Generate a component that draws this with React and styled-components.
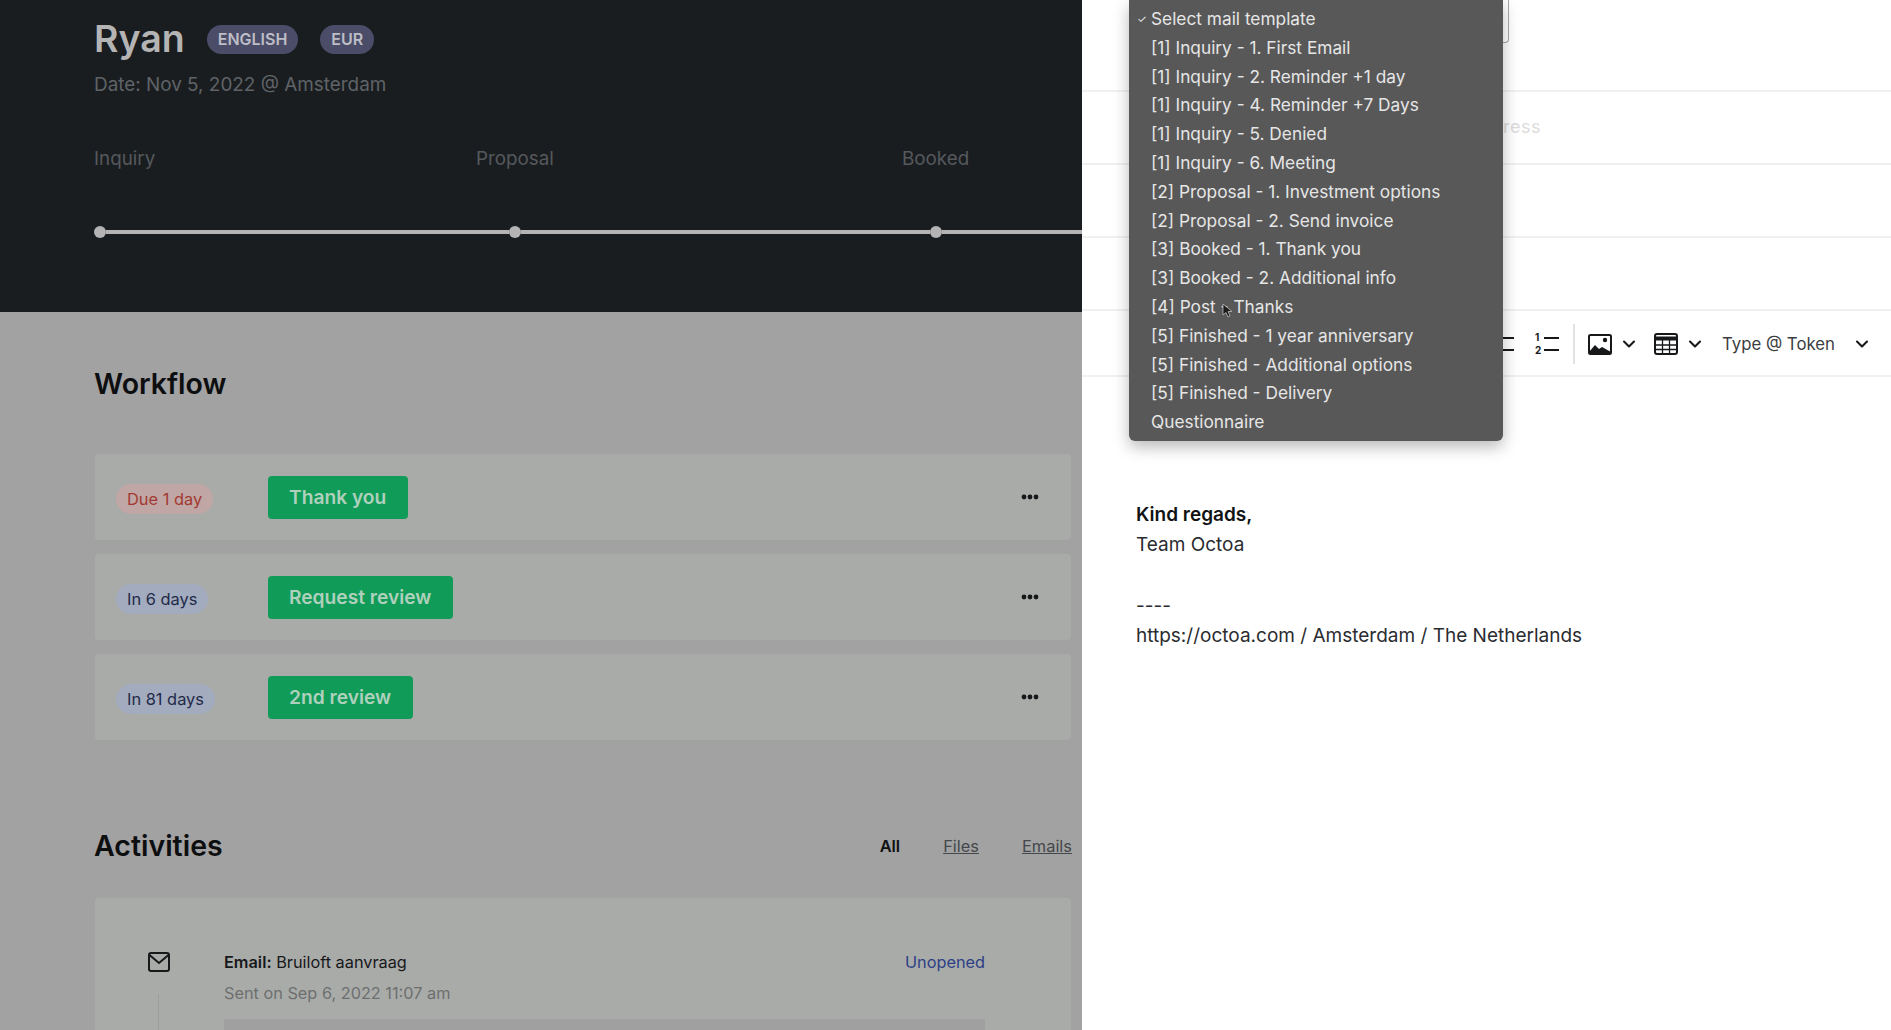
import styled, { createGlobalStyle } from "styled-components";
import { ChevronDown } from "lucide-react";

const Global = createGlobalStyle`
  html, body {
    margin: 0;
    height: 100%;
    overflow: hidden;
    background: #fff;
    font-family: Inter, "Liberation Sans", sans-serif;
  }
`;

const Page = styled.div`
  display: flex;
  width: 1891px;
  height: 1030px;
  overflow: hidden;
`;

const Left = styled.div`
  width: 1082px;
  flex: none;
  background: #a2a2a2;
  height: 100%;
  overflow: hidden;
`;

const Hero = styled.header`
  height: 312px;
  box-sizing: border-box;
  background: #1a1d20;
  padding: 17px 0 0 94px;
`;

const NameRow = styled.div`
  display: flex;
  align-items: center;
  height: 44px;
`;

const Name = styled.h1`
  margin: 0 22px 0 0;
  font-size: 37.5px;
  line-height: 44px;
  font-weight: 600;
  color: #b4b4b4;
`;

const Badge = styled.span`
  display: block;
  height: 29px;
  line-height: 29px;
  padding: 0 11px;
  margin-right: 22px;
  border-radius: 15px;
  background: #4b4c68;
  color: #bdbdc6;
  font-size: 16px;
  font-weight: 600;
`;

const DateLine = styled.div`
  margin-top: 13px;
  font-size: 18.9px;
  line-height: 22px;
  color: #5f6367;
`;

const Stages = styled.div`
  display: grid;
  grid-template-columns: 382px 426px 1fr;
  margin-top: 52px;
  font-size: 18.8px;
  line-height: 22px;
  color: #55585c;
`;

const Track = styled.div`
  display: flex;
  align-items: center;
  margin: 56px 0 0 0;
`;

const Dot = styled.span`
  width: 12px;
  height: 12px;
  flex: none;
  border-radius: 50%;
  background: #b4b4b4;
`;

const Segment = styled.span`
  height: 4px;
  background: #b4b4b4;
  flex: ${(p) => (p.$grow ? "1" : "none")};
  width: ${(p) => p.$w || 0}px;
`;

const Main = styled.main`
  padding: 55px 11px 0 95px;
`;

const SectionTitle = styled.h2`
  margin: 0 0 0 -1px;
  font-size: 28.5px;
  line-height: 34px;
  font-weight: 600;
  color: #0d0e10;
`;

const WorkflowList = styled.div`
  display: flex;
  flex-direction: column;
  gap: 14px;
  margin-top: 53px;
`;

const Card = styled.div`
  display: flex;
  align-items: center;
  height: 86px;
  padding: 0 32px 0 21px;
  border-radius: 4px;
  background: #a9aba9;
`;

const Due = styled.span`
  width: 152px;
  flex: none;
  display: flex;
  margin-top: 3px;
`;

const DuePill = styled.span`
  height: 30px;
  line-height: 30px;
  padding: 0 11px;
  border-radius: 15px;
  font-size: 16.4px;
  background: ${(p) => (p.$late ? "#c0a6a4" : "#a3abbe")};
  color: ${(p) => (p.$late ? "#a13a33" : "#1f2a48")};
`;

const ActionButton = styled.span`
  height: 43px;
  line-height: 43px;
  padding: 0 22px 0 21px;
  border-radius: 4px;
  background: #109c58;
  color: #aed0bc;
  font-size: 19.2px;
  font-weight: 600;
`;

const More = styled.svg`
  margin-left: auto;
  width: 18px;
  height: 6px;
  fill: #17181a;
`;

const ActivityHead = styled.div`
  display: flex;
  align-items: center;
  margin-top: 89px;
`;

const Tabs = styled.nav`
  margin: 0 -1px 0 auto;
  display: flex;
  gap: 43px;
  font-size: 16.4px;
`;

const Tab = styled.span`
  color: ${(p) => (p.$active ? "#101113" : "#44474b")};
  font-weight: ${(p) => (p.$active ? 600 : 400)};
  text-decoration: ${(p) => (p.$active ? "none" : "underline")};
`;

const ActivityCard = styled.section`
  display: grid;
  grid-template-columns: 128px 1fr;
  margin-top: 35px;
  height: 300px;
  box-sizing: border-box;
  padding: 52px 86px 0 53px;
  border-radius: 4px;
  background: #a9aba9;
`;

const IconCol = styled.div`
  display: flex;
  flex-direction: column;
  align-items: flex-start;
  padding-top: 2px;
`;

const Rail = styled.span`
  width: 1px;
  height: 200px;
  margin: 22px 0 0 10px;
  background: #9b9d9b;
`;

const ActivityBody = styled.div`
  min-width: 0;
  margin-left: -52px;
`;

const ActivityTop = styled.div`
  display: flex;
  justify-content: space-between;
  font-size: 16.3px;
  line-height: 24px;
  color: #17181a;

  b {
    font-weight: 600;
  }
`;

const Status = styled.span`
  color: #2d3f86;
`;

const Sent = styled.div`
  margin-top: 7px;
  font-size: 16.3px;
  line-height: 24px;
  color: #6d6f6f;
`;

const Preview = styled.div`
  height: 80px;
  margin-top: 14px;
  background: #a0a0a0;
`;

const Right = styled.div`
  position: relative;
  flex: 1;
  height: 100%;
  background: #fff;
  color: #303236;
`;

const Field = styled.div`
  box-sizing: border-box;
  height: ${(p) => p.$h}px;
  border-bottom: 2px solid #f0f0f0;
  display: flex;
  align-items: center;
  justify-content: flex-end;
  padding: 0 350px 2px 0;
  font-size: 18px;
  color: #dcdcdc;
  letter-spacing: 0.5px;
`;

const FirstField = styled(Field)`
  align-items: flex-start;
  padding: 0 382px 0 0;
`;

const SelectBox = styled.div`
  width: 300px;
  height: 43px;
  box-sizing: border-box;
  border: 1px solid #a8a8a8;
  border-top: none;
  border-radius: 0 0 4px 4px;
`;

const Toolbar = styled.div`
  box-sizing: border-box;
  height: 66px;
  display: flex;
  align-items: center;
  justify-content: flex-end;
  padding: 2px 19px 0 0;
  border-bottom: 2px solid #f0f0f0;
  color: #17181a;
`;

const ToolIcon = styled.svg`
  display: block;
  flex: none;
  margin-left: ${(p) => p.$ml || 0}px;
`;

const Divider = styled.span`
  width: 2px;
  height: 40px;
  margin: 0 13px 0 14px;
  background: #e2e2e2;
`;

const Chevron = styled(ChevronDown)`
  flex: none;
  margin-left: ${(p) => p.$ml || 0}px;
`;

const Token = styled.span`
  margin-left: 17px;
  font-size: 16.8px;
  color: #3c3e42;
`;

const Body = styled.div`
  padding: 123px 0 0 54px;
  font-size: 19px;
  line-height: 30.3px;
  color: #2a2c30;

  b {
    font-weight: 600;
    color: #111214;
  }
`;

const Menu = styled.ul`
  position: absolute;
  left: 47px;
  top: 0;
  width: 374px;
  height: 441px;
  box-sizing: border-box;
  margin: 0;
  padding: 5px 0 0 8px;
  list-style: none;
  background: #585858;
  border-radius: 0 0 6px 6px;
  box-shadow: 0 6px 16px rgba(0, 0, 0, 0.28);
  color: #e6e6e6;
  font-size: 17.3px;
  line-height: 28.8px;
`;

const MenuItem = styled.li`
  display: flex;
  white-space: pre;
  padding-left: 14px;
`;

const CheckedItem = styled(MenuItem)`
  padding-left: 0;

  i {
    width: 14px;
    font-style: normal;
    font-size: 11px;
  }
`;

const Pointer = styled.svg`
  position: absolute;
  left: 140px;
  top: 303px;
`;

const steps = [
  { due: "Due 1 day", late: true, label: "Thank you" },
  { due: "In 6 days", label: "Request review" },
  { due: "In 81 days", label: "2nd review" },
];

const templates = [
  "[1] Inquiry - 1. First Email",
  "[1] Inquiry - 2. Reminder +1 day",
  "[1] Inquiry - 4. Reminder +7 Days",
  "[1] Inquiry - 5. Denied",
  "[1] Inquiry - 6. Meeting",
  "[2] Proposal - 1. Investment options",
  "[2] Proposal - 2. Send invoice",
  "[3] Booked - 1. Thank you",
  "[3] Booked - 2. Additional info",
  "[4] Post - Thanks",
  "[5] Finished - 1 year anniversary",
  "[5] Finished - Additional options",
  "[5] Finished - Delivery",
];

function MailIcon() {
  return (
    <svg width="22" height="20" viewBox="0 0 22 20" fill="none" stroke="#17181a" strokeWidth="2">
      <rect x="1" y="1" width="20" height="18" rx="2" />
      <path d="M1.5 3l9.5 8 9.5-8" />
    </svg>
  );
}

function ListIcons() {
  return (
    <>
      <ToolIcon width="26" height="16" viewBox="0 0 26 16" stroke="#17181a" strokeWidth="2">
        <path d="M0 2h14M0 14h14" />
      </ToolIcon>
      <ToolIcon $ml={9} width="24" height="22" viewBox="0 0 24 22" stroke="#17181a" strokeWidth="2">
        <text x="0" y="8" fontSize="10" fontWeight="700" fill="#17181a" stroke="none">1</text>
        <text x="0" y="21" fontSize="10" fontWeight="700" fill="#17181a" stroke="none">2</text>
        <path d="M9 5h15M9 17h15" />
      </ToolIcon>
    </>
  );
}

function ImageIcon() {
  return (
    <ToolIcon width="24" height="21" viewBox="0 0 24 21">
      <rect x="1" y="1" width="22" height="19" rx="1.5" fill="none" stroke="#17181a" strokeWidth="2" />
      <circle cx="17" cy="6" r="2.2" fill="#17181a" />
      <path d="M1 18l6-7 4 4 3-2 9 5v2H1z" fill="#17181a" />
    </ToolIcon>
  );
}

function TableIcon() {
  return (
    <ToolIcon $ml={15} width="24" height="22" viewBox="0 0 24 22" fill="none" stroke="#17181a">
      <rect x="1" y="1" width="22" height="20" rx="2" strokeWidth="2" />
      <path d="M1 5.5h22" strokeWidth="4" />
      <path d="M1 12h22M1 16.500h22M8.500 6v15M15.500 6v15" strokeWidth="1.300" />
    </ToolIcon>
  );
}

export default function App() {
  return (
    <Page>
      <Global />
      <Left>
        <Hero>
          <NameRow>
            <Name>Ryan</Name>
            <Badge>ENGLISH</Badge>
            <Badge>EUR</Badge>
          </NameRow>
          <DateLine>Date: Nov 5, 2022 @ Amsterdam</DateLine>
          <Stages>
            <span>Inquiry</span>
            <span>Proposal</span>
            <span>Booked</span>
          </Stages>
          <Track>
            <Dot />
            <Segment $w={403} />
            <Dot />
            <Segment $w={409} />
            <Dot />
            <Segment $grow />
          </Track>
        </Hero>
        <Main>
          <SectionTitle>Workflow</SectionTitle>
          <WorkflowList>
            {steps.map((s) => (
              <Card key={s.label}>
                <Due>
                  <DuePill $late={s.late}>{s.due}</DuePill>
                </Due>
                <ActionButton>{s.label}</ActionButton>
                <More viewBox="0 0 18 6">
                  <circle cx="3" cy="3" r="2.400" />
                  <circle cx="9" cy="3" r="2.400" />
                  <circle cx="15" cy="3" r="2.400" />
                </More>
              </Card>
            ))}
          </WorkflowList>
          <ActivityHead>
            <SectionTitle>Activities</SectionTitle>
            <Tabs>
              <Tab $active>All</Tab>
              <Tab>Files</Tab>
              <Tab>Emails</Tab>
            </Tabs>
          </ActivityHead>
          <ActivityCard>
            <IconCol>
              <MailIcon />
              <Rail />
            </IconCol>
            <ActivityBody>
              <ActivityTop>
                <span>
                  <b>Email:</b> Bruiloft aanvraag
                </span>
                <Status>Unopened</Status>
              </ActivityTop>
              <Sent>Sent on Sep 6, 2022 11:07 am</Sent>
              <Preview />
            </ActivityBody>
          </ActivityCard>
        </Main>
      </Left>
      <Right>
        <FirstField $h={92}>
          <SelectBox />
        </FirstField>
        <Field $h={73}>Email address</Field>
        <Field $h={73} />
        <Field $h={73} />
        <Toolbar>
          <ListIcons />
          <Divider />
          <ImageIcon />
          <Chevron $ml={7} size={20} strokeWidth={2.5} />
          <TableIcon />
          <Chevron $ml={7} size={20} strokeWidth={2.5} />
          <Token>Type @ Token</Token>
          <Chevron $ml={17} size={20} strokeWidth={2.5} />
        </Toolbar>
        <Body>
          <b>Kind regads,</b>
          <br />
          Team Octoa
          <br />
          <br />
          ----
          <br />
          https://octoa.com / Amsterdam / The Netherlands
        </Body>
        <Menu>
          <CheckedItem>
            <i>✓</i>Select mail template
          </CheckedItem>
          {templates.map((t) => (
            <MenuItem key={t}>{t}</MenuItem>
          ))}
          <MenuItem>Questionnaire</MenuItem>
        </Menu>
        <Pointer width="12" height="16" viewBox="0 0 12 16">
          <path d="M1 1l0 11 3-2.500 2 4.500 2-1-2-4.500h4z" fill="#1a1a1a" stroke="#bbb" strokeWidth="0.800" />
        </Pointer>
      </Right>
    </Page>
  );
}
